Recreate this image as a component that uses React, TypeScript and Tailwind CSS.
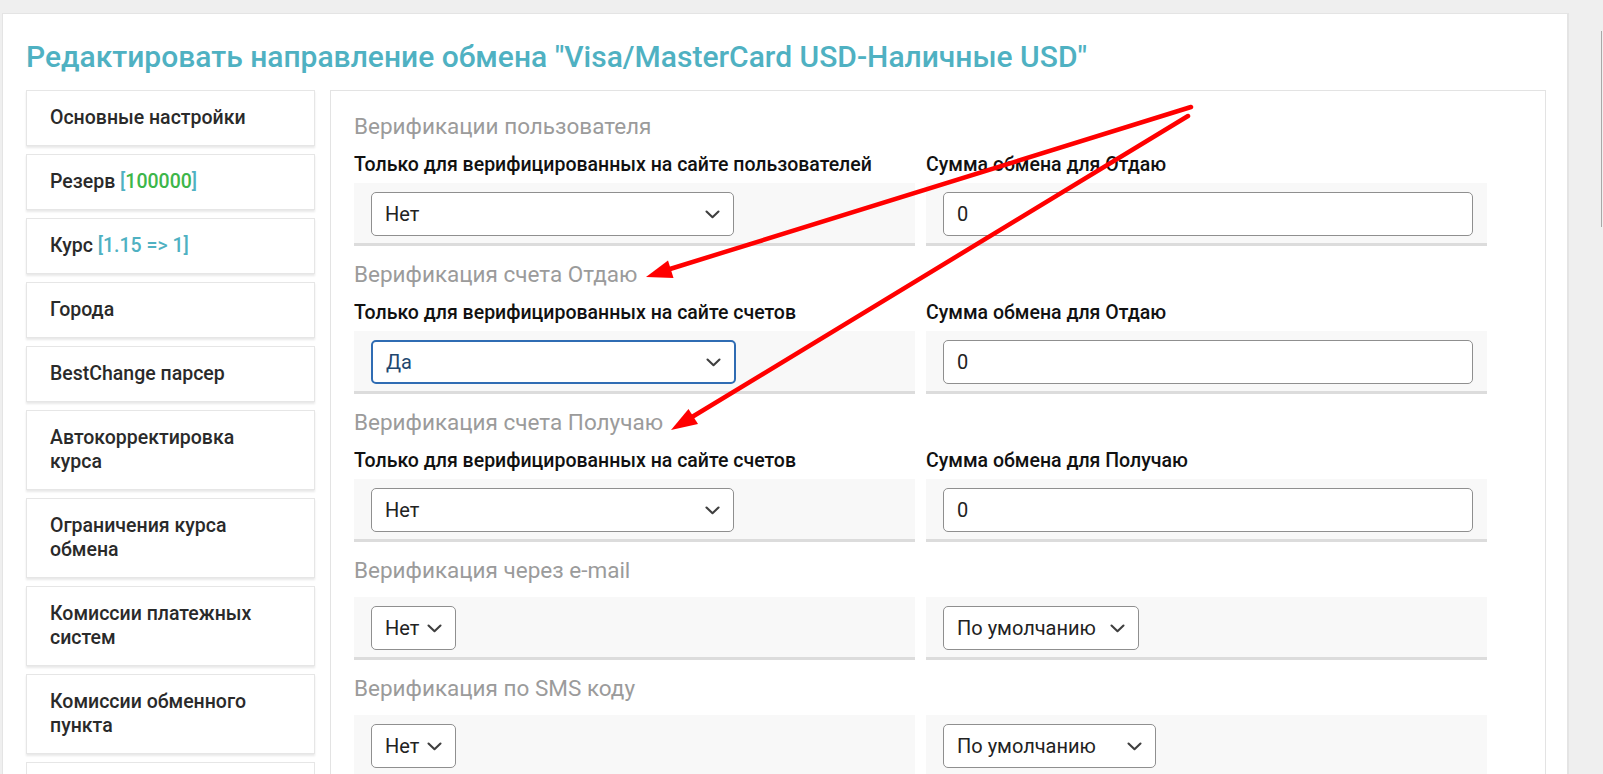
import React from "react";

function Chevron() {
  return (
    <svg width="15" height="9" viewBox="0 0 15 9" className="shrink-0">
      <path d="M1.5 1.5 L7.5 7.2 L13.5 1.5" fill="none" stroke="#3f3f3f" strokeWidth="2.1" strokeLinecap="round" strokeLinejoin="round" />
    </svg>
  );
}

function Select({ value, w, focused }: { value: string; w: string; focused?: boolean }) {
  return (
    <div
      className={
        "h-[44px] rounded-[5px] bg-white flex items-center justify-between pl-[13px] pr-[13px] " +
        w +
        (focused ? " border-2 border-[#2f6cb3] text-[#22476f]" : " border border-[#8f8f8f] text-[#222]")
      }
    >
      <span className="text-[20px] leading-none">{value}</span>
      <Chevron />
    </div>
  );
}

function Input({ value }: { value: string }) {
  return (
    <div className="h-[44px] w-[530px] rounded-[5px] bg-white border border-[#8f8f8f] flex items-center pl-[13px] text-[20px] text-[#222]">
      {value}
    </div>
  );
}

function Row({ children }: { children: React.ReactNode }) {
  return (
    <div className="bg-[#f8f8f8] border-b-[3px] border-[#dcdcdc] pt-[9px] pb-[7px] pl-[17px] pr-[13px]">{children}</div>
  );
}

function Label({ children }: { children: React.ReactNode }) {
  return <div className="text-[19.5px] leading-[24px] mb-[6px] font-medium text-[#111] whitespace-nowrap">{children}</div>;
}

function Section({
  title,
  left,
  right,
}: {
  title: string;
  left: { label?: string; control: React.ReactNode };
  right: { label?: string; control: React.ReactNode };
}) {
  return (
    <div className="mb-[13px]">
      <div className="text-[22.5px] leading-[30px] text-[#9b9b9b] mb-[12px]">{title}</div>
      <div className="grid grid-cols-[561px_561px] gap-x-[11px]">
        <div>
          {left.label && <Label>{left.label}</Label>}
          <Row>{left.control}</Row>
        </div>
        <div>
          {right.label && <Label>{right.label}</Label>}
          <Row>{right.control}</Row>
        </div>
      </div>
    </div>
  );
}

function SideItem({ children }: { children: React.ReactNode }) {
  return (
    <div className="bg-white border border-[#e6e6e6] shadow-[0_2px_2px_rgba(0,0,0,0.09)] pl-[23px] pr-[16px] py-[15px] text-[19.5px] leading-[24px] font-medium text-[#2a2a2a] whitespace-nowrap">
      {children}
    </div>
  );
}

export default function App() {
  return (
    <div className="relative h-[774px] w-[1603px] overflow-hidden bg-[#efefef] font-['Roboto',sans-serif]">
      <div className="ml-[2px] mt-[13px] w-[1567px] h-[800px] bg-white border-t border-l border-r-2 border-[#e4e4e4] pl-[23px] pt-[24px]">
        <h1 className="text-[30px] leading-[38px] font-medium text-[#4fb1c2]">
          Редактировать направление обмена "Visa/MasterCard USD-Наличные USD"
        </h1>
        <div className="flex gap-[15px] mt-[14px]">
          <div className="w-[289px] flex flex-col gap-[8px]">
            <SideItem>Основные настройки</SideItem>
            <SideItem>
              Резерв <span className="text-[#4fb1c2]">[</span>
              <span className="text-[#3db64a]">100000</span>
              <span className="text-[#4fb1c2]">]</span>
            </SideItem>
            <SideItem>
              Курс <span className="text-[#4fb1c2]">[1.15 =&gt; 1]</span>
            </SideItem>
            <SideItem>Города</SideItem>
            <SideItem>BestChange парсер</SideItem>
            <SideItem>
              Автокорректировка
              <br />
              курса
            </SideItem>
            <SideItem>
              Ограничения курса
              <br />
              обмена
            </SideItem>
            <SideItem>
              Комиссии платежных
              <br />
              систем
            </SideItem>
            <SideItem>
              Комиссии обменного
              <br />
              пункта
            </SideItem>
            <div className="bg-white border border-[#e6e6e6] h-[60px]" />
          </div>
          <div className="w-[1216px] h-[700px] border border-[#e3e3e3] pl-[23px] pt-[20px]">
            <Section
              title="Верификации пользователя"
              left={{ label: "Только для верифицированных на сайте пользователей", control: <Select value="Нет" w="w-[363px]" /> }}
              right={{ label: "Сумма обмена для Отдаю", control: <Input value="0" /> }}
            />
            <Section
              title="Верификация счета Отдаю"
              left={{ label: "Только для верифицированных на сайте счетов", control: <Select value="Да" w="w-[365px]" focused /> }}
              right={{ label: "Сумма обмена для Отдаю", control: <Input value="0" /> }}
            />
            <Section
              title="Верификация счета Получаю"
              left={{ label: "Только для верифицированных на сайте счетов", control: <Select value="Нет" w="w-[363px]" /> }}
              right={{ label: "Сумма обмена для Получаю", control: <Input value="0" /> }}
            />
            <Section
              title="Верификация через e-mail"
              left={{ control: <Select value="Нет" w="w-[85px]" /> }}
              right={{ control: <Select value="По умолчанию" w="w-[196px]" /> }}
            />
            <Section
              title="Верификация по SMS коду"
              left={{ control: <Select value="Нет" w="w-[85px]" /> }}
              right={{ control: <Select value="По умолчанию" w="w-[213px]" /> }}
            />
          </div>
        </div>
      </div>
      <div className="absolute left-[1601px] top-[31px] w-px h-[196px] bg-[#a8a8a8]" />
      <svg className="absolute inset-0 pointer-events-none" width="1603" height="774" viewBox="0 0 1603 774">
        <line x1="1191" y1="107" x2="670" y2="269" stroke="#ff0000" strokeWidth="4.5" strokeLinecap="round" />
        <polygon points="646,277 673.5,278 668,260.5" fill="#ff0000" />
        <line x1="1188" y1="116" x2="692" y2="417" stroke="#ff0000" strokeWidth="4.5" strokeLinecap="round" />
        <polygon points="671,430 698,424 688.5,409" fill="#ff0000" />
      </svg>
    </div>
  );
}
